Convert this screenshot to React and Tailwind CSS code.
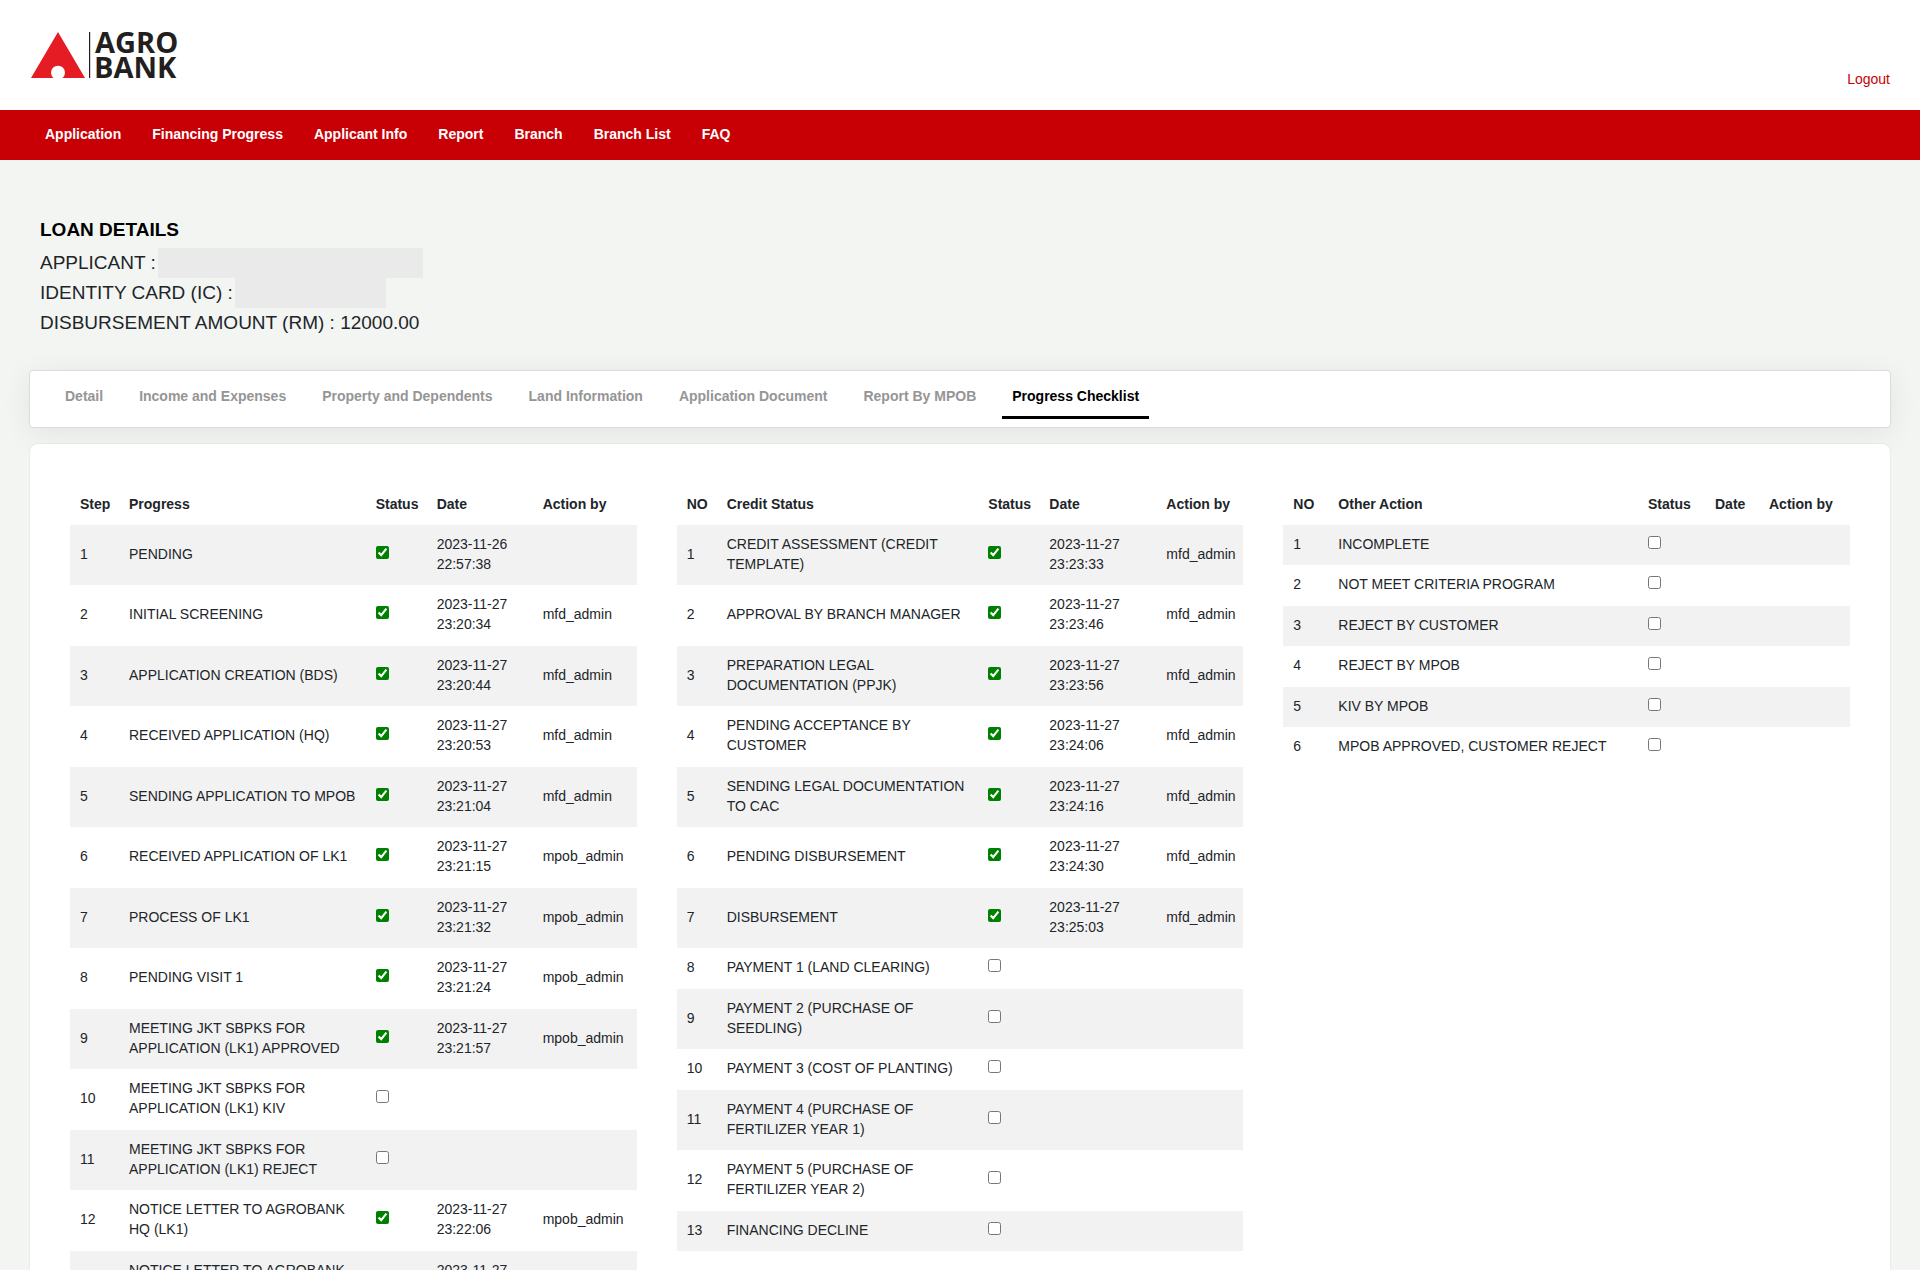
const navItems = ["Application", "Financing Progress", "Applicant Info", "Report", "Branch", "Branch List", "FAQ"];

const tabs = [
  "Detail",
  "Income and Expenses",
  "Property and Dependents",
  "Land Information",
  "Application Document",
  "Report By MPOB",
  "Progress Checklist",
];

const day = "2023-11-27";

const progressRows = [
  ["PENDING", "2023-11-26 22:57:38", ""],
  ["INITIAL SCREENING", `${day} 23:20:34`, "mfd_admin"],
  ["APPLICATION CREATION (BDS)", `${day} 23:20:44`, "mfd_admin"],
  ["RECEIVED APPLICATION (HQ)", `${day} 23:20:53`, "mfd_admin"],
  ["SENDING APPLICATION TO MPOB", `${day} 23:21:04`, "mfd_admin"],
  ["RECEIVED APPLICATION OF LK1", `${day} 23:21:15`, "mpob_admin"],
  ["PROCESS OF LK1", `${day} 23:21:32`, "mpob_admin"],
  ["PENDING VISIT 1", `${day} 23:21:24`, "mpob_admin"],
  ["MEETING JKT SBPKS FOR APPLICATION (LK1) APPROVED", `${day} 23:21:57`, "mpob_admin"],
  ["MEETING JKT SBPKS FOR APPLICATION (LK1) KIV", "", ""],
  ["MEETING JKT SBPKS FOR APPLICATION (LK1) REJECT", "", ""],
  ["NOTICE LETTER TO AGROBANK HQ (LK1)", `${day} 23:22:06`, "mpob_admin"],
  ["NOTICE LETTER TO AGROBANK BRANCH (LK1)", `${day} 23:22:15`, "mpob_admin"],
];

const creditRows = [
  ["CREDIT ASSESSMENT (CREDIT TEMPLATE)", `${day} 23:23:33`, "mfd_admin"],
  ["APPROVAL BY BRANCH MANAGER", `${day} 23:23:46`, "mfd_admin"],
  ["PREPARATION LEGAL DOCUMENTATION (PPJK)", `${day} 23:23:56`, "mfd_admin"],
  ["PENDING ACCEPTANCE BY CUSTOMER", `${day} 23:24:06`, "mfd_admin"],
  ["SENDING LEGAL DOCUMENTATION TO CAC", `${day} 23:24:16`, "mfd_admin"],
  ["PENDING DISBURSEMENT", `${day} 23:24:30`, "mfd_admin"],
  ["DISBURSEMENT", `${day} 23:25:03`, "mfd_admin"],
  ["PAYMENT 1 (LAND CLEARING)", "", ""],
  ["PAYMENT 2 (PURCHASE OF SEEDLING)", "", ""],
  ["PAYMENT 3 (COST OF PLANTING)", "", ""],
  ["PAYMENT 4 (PURCHASE OF FERTILIZER YEAR 1)", "", ""],
  ["PAYMENT 5 (PURCHASE OF FERTILIZER YEAR 2)", "", ""],
  ["FINANCING DECLINE", "", ""],
];

const otherRows = [
  ["INCOMPLETE", "", ""],
  ["NOT MEET CRITERIA PROGRAM", "", ""],
  ["REJECT BY CUSTOMER", "", ""],
  ["REJECT BY MPOB", "", ""],
  ["KIV BY MPOB", "", ""],
  ["MPOB APPROVED, CUSTOMER REJECT", "", ""],
];

const cell = "px-2.5 pt-[9px] pb-[11px] group-even:pb-3";

function Logo() {
  return (
    <svg width="152" height="50" viewBox="0 0 152 50" role="img" aria-label="Agro Bank" className="overflow-visible">
      <path d="M28 2 L55 48 H32.5 A7 7 0 1 0 23.5 48 H1 Z" fill="#e61c24" />
      <rect x="59" y="2" width="1.2" height="46" fill="#231f20" />
      <g fill="#231f20" fontFamily="'Open Sans', sans-serif" fontWeight="700" fontSize="29">
        <text x="65" y="23">AGRO</text>
        <text x="64" y="48">BANK</text>
      </g>
    </svg>
  );
}

function ChecklistTable({ head, columns, rows }) {
  return (
    <table className="w-full table-fixed border-collapse text-left">
      <colgroup>
        {columns.map((c, i) => (
          <col key={i} className={c} />
        ))}
      </colgroup>
      <thead>
        <tr>
          {head.map((h) => (
            <th key={h} scope="col" className="whitespace-nowrap px-2.5 pt-[9px] pb-[11px] font-bold">
              {h}
            </th>
          ))}
        </tr>
      </thead>
      <tbody>
        {rows.map(([name, date, by], i) => (
          <tr key={name} className="group odd:bg-[#f2f2f2]">
            <td className={cell}>{i + 1}</td>
            <td className={cell}>{name}</td>
            <td className={cell}>
              <input
                type="checkbox"
                aria-label={name}
                defaultChecked={date !== ""}
                className="mb-[3px] block size-[13px] accent-[#008000]"
              />
            </td>
            <td className={cell}>{date}</td>
            <td className="pt-[9px] pb-[11px] pl-2.5 group-even:pb-3">{by}</td>
          </tr>
        ))}
      </tbody>
    </table>
  );
}

export default function App() {
  return (
    <div className="min-h-screen bg-[#f3f5f3] font-['Liberation_Sans',Arial,sans-serif] text-sm leading-5 text-[#212529]">
      <header className="flex items-end justify-between bg-white px-[30px] pt-[30px] pb-[21px]">
        <a href="#" className="mb-[9px]">
          <Logo />
        </a>
        <a href="#" className="text-[#c80005]">
          Logout
        </a>
      </header>

      <nav className="flex gap-[31px] bg-[#c80005] px-[45px] pt-3.5 pb-4 font-bold text-white">
        {navItems.map((n) => (
          <a key={n} href="#">
            {n}
          </a>
        ))}
      </nav>

      <main className="px-[30px] pt-[55px] pb-[30px]">
        <section className="px-2.5 text-[19px] leading-[30px]">
          <h1 className="mb-[3px] font-bold text-black">LOAN DETAILS</h1>
          <p className="flex items-center gap-0.5">
            APPLICANT : <span className="h-[30px] w-[265px] bg-[#eaeaea]" />
          </p>
          <p className="flex items-center gap-0.5">
            IDENTITY CARD (IC) : <span className="h-[30px] w-[151px] bg-[#eaeaea]" />
          </p>
          <p>DISBURSEMENT AMOUNT (RM) : 12000.00</p>
        </section>

        <div
          role="tablist"
          className="-mx-px mt-8 flex gap-4 rounded border border-[#dcdcdc] bg-white px-[25px] pt-[15px] pb-2 font-bold shadow-[0_5px_30px_rgba(0,0,0,0.07)]"
        >
          {tabs.map((t) => (
            <button
              key={t}
              type="button"
              role="tab"
              aria-selected={t === "Progress Checklist"}
              className="border-b-3 border-transparent px-2.5 pb-2.5 text-[#959595] aria-selected:border-black aria-selected:text-black"
            >
              {t}
            </button>
          ))}
        </div>

        <section className="mt-4 grid grid-cols-3 items-start gap-10 rounded-lg bg-white px-10 pt-[41px] pb-10 shadow-[0_0_2px_rgba(0,0,0,0.12)]">
          <ChecklistTable
            head={["Step", "Progress", "Status", "Date", "Action by"]}
            columns={["w-[49px]", "w-auto", "w-[61px]", "w-[106px]", "w-[104px]"]}
            rows={progressRows}
          />
          <ChecklistTable
            head={["NO", "Credit Status", "Status", "Date", "Action by"]}
            columns={["w-[40px]", "w-auto", "w-[61px]", "w-[117px]", "w-[87px]"]}
            rows={creditRows}
          />
          <ChecklistTable
            head={["NO", "Other Action", "Status", "Date", "Action by"]}
            columns={["w-[45px]", "w-auto", "w-[67px]", "w-[54px]", "w-[91px]"]}
            rows={otherRows}
          />
        </section>
      </main>
    </div>
  );
}
